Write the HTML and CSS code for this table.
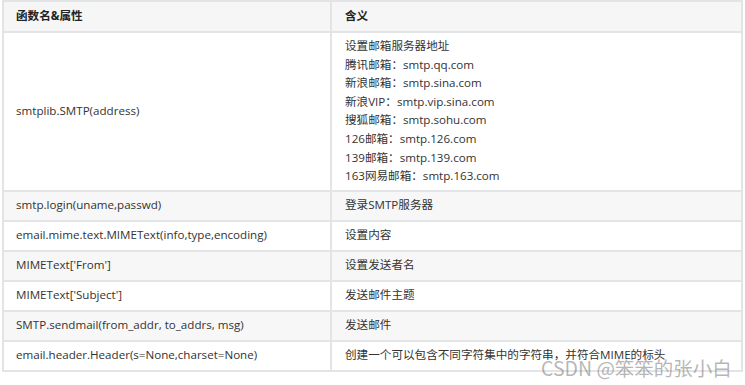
FILE: index.html
```html
<!DOCTYPE html>
<html lang="zh">
<head>
<meta charset="utf-8">
<title>smtplib</title>
<link rel="stylesheet" href="styles.css">
</head>
<body>
<div class="page">
  <table class="api">
    <thead>
      <tr><th class="c1">函数名&amp;属性</th><th class="c2">含义</th></tr>
    </thead>
    <tbody>
      <tr class="odd">
        <td>smtplib.SMTP(address)</td>
        <td class="multi">设置邮箱服务器地址<br>腾讯邮箱：smtp.qq.com<br>新浪邮箱：smtp.sina.com<br>新浪VIP：smtp.vip.sina.com<br>搜狐邮箱：smtp.sohu.com<br>126邮箱：smtp.126.com<br>139邮箱：smtp.139.com<br>163网易邮箱：smtp.163.com</td>
      </tr>
      <tr class="even"><td>smtp.login(uname,passwd)</td><td>登录SMTP服务器</td></tr>
      <tr class="odd"><td>email.mime.text.MIMEText(info,type,encoding)</td><td>设置内容</td></tr>
      <tr class="even"><td>MIMEText['From']</td><td>设置发送者名</td></tr>
      <tr class="odd"><td>MIMEText['Subject']</td><td>发送邮件主题</td></tr>
      <tr class="even"><td>SMTP.sendmail(from_addr, to_addrs, msg)</td><td>发送邮件</td></tr>
      <tr class="odd"><td>email.header.Header(s=None,charset=None)</td><td>创建一个可以包含不同字符集中的字符串，并符合MIME的标头</td></tr>
    </tbody>
  </table>
  <div class="watermark">CSDN @笨笨的张小白</div>
</div>
</body>
</html>
```

FILE: styles.css
```css
html, body {
  margin: 0;
  padding: 0;
  background: #ffffff;
}
.page {
  position: relative;
  width: 745px;
  height: 385px;
  padding: 0 0 0 2px;
  box-sizing: border-box;
}
.api {
  border-collapse: collapse;
  width: 741px;
  font-family: "Open Sans", "Noto Sans CJK SC", sans-serif;
  font-size: 11.6px;
  color: #333333;
  table-layout: fixed;
}
.api th, .api td {
  border: 2px solid #e2e4e6;
  text-align: left;
  vertical-align: middle;
  padding: 0 12px;
  line-height: 18.6px;
  height: 28px;
}
.api th {
  background: #f6f6f6;
  font-weight: bold;
  color: #222222;
  height: 29px;
}
.api .c1 { width: 302px; }
.api .c2 { padding-left: 13px; }
.api td + td { padding-left: 13px; }
.api td.multi {
  padding-top: 4px;
  padding-bottom: 4px;
}
.api tr.even td { background: #f7f7f7; }
.api tr.odd td { background: #ffffff; }
.watermark {
  position: absolute;
  left: 541px;
  top: 354px;
  font-family: "Noto Sans CJK SC", "Open Sans", sans-serif;
  font-size: 19.5px;
  line-height: 28px;
  color: rgba(110, 110, 110, 0.5);
  white-space: nowrap;
}
```
